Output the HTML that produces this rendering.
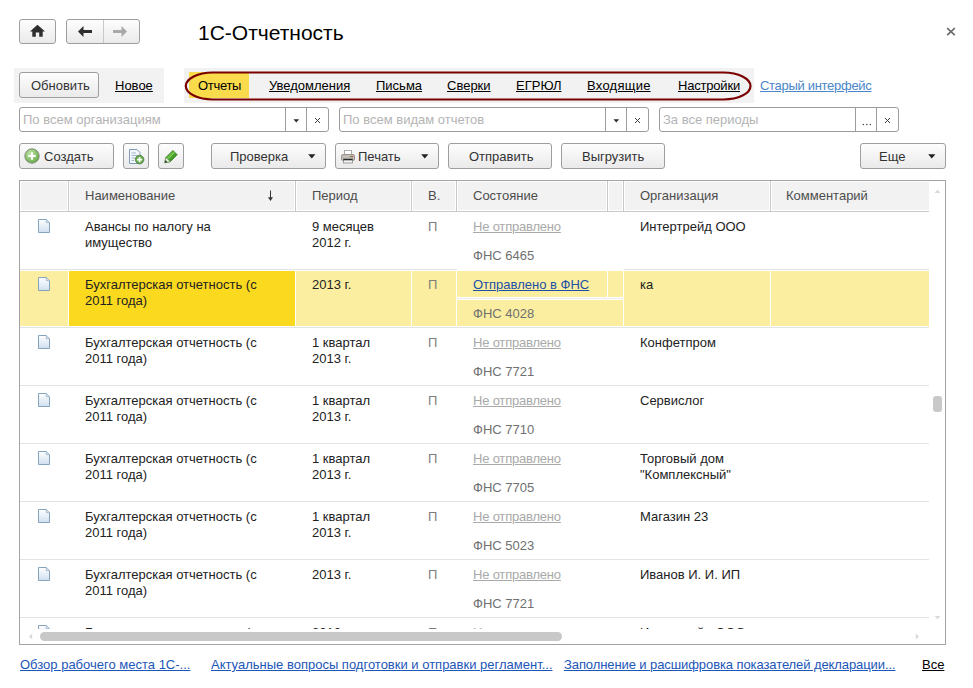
<!DOCTYPE html>
<html><head><meta charset="utf-8">
<style>
*{box-sizing:border-box;margin:0;padding:0}
html,body{width:973px;height:688px;overflow:hidden;background:#fff}
body{position:relative;font-family:"Liberation Sans",sans-serif;font-size:13px;color:#333}
.a{position:absolute}
.btn{position:absolute;border:1px solid #9e9e9e;border-radius:3px;background:linear-gradient(#fdfdfd,#eaeaea);height:26px}
.t{position:absolute;white-space:nowrap;line-height:16px}
.u{text-decoration:underline}
.panel{position:absolute;background:#f2f2f2}
.inp{position:absolute;border:1px solid #9c9c9c;border-radius:3px;background:#fff;height:25px}
.ph{position:absolute;color:#b4b4b4;white-space:nowrap;line-height:16px}
.vd{position:absolute;top:0;bottom:0;width:1px;background:#9c9c9c}
.tri{position:absolute;width:0;height:0;border-left:3.5px solid transparent;border-right:3.5px solid transparent;border-top:4px solid #333}
.hb{position:absolute;background:#f2f2f2}
.hl{position:absolute;background:#c9c9c9}
.ht{position:absolute;white-space:nowrap;color:#4d4d4d;line-height:16px}
.bt{position:absolute;white-space:nowrap;color:#222;line-height:16px}
.sep{position:absolute;height:1px;background:#e3e3e3}
.doc{position:absolute}
</style></head><body>
<div class="btn" style="left:19px;top:19px;width:37px;height:25px"></div>
<svg class="a" style="left:30px;top:24px" width="16" height="14" viewBox="0 0 16 14"><path d="M7.5 0.8 L0 7.6 H2.3 V12.8 H5.8 V8.5 H9.2 V12.8 H12.7 V7.6 H15 Z" fill="#2e2e2e"/></svg>
<div class="btn" style="left:66px;top:19px;width:74px;height:25px"></div>
<div class="a" style="left:103px;top:20px;width:1px;height:23px;background:#c8c8c8"></div>
<svg class="a" style="left:77px;top:25px" width="16" height="13" viewBox="0 0 16 13"><path d="M1 6.5 L6.5 1 V5 H15 V8 H6.5 V12 Z" fill="#2e2e2e"/></svg>
<svg class="a" style="left:112px;top:25px" width="16" height="13" viewBox="0 0 16 13"><path d="M15 6.5 L9.5 1 V5 H1 V8 H9.5 V12 Z" fill="#a8a8a8"/></svg>
<div class="t" style="left:198px;top:22px;font-size:21px;line-height:22px;color:#000">1С-Отчетность</div>
<svg class="a" style="left:946px;top:27px" width="10" height="10" viewBox="0 0 10 10"><path d="M1.2 1.2 L8.8 8.2 M8.8 1.2 L1.2 8.2" stroke="#6a6a6a" stroke-width="1.6"/></svg>
<div class="panel" style="left:14px;top:68px;width:150px;height:35px"></div>
<div class="btn" style="left:19px;top:72px;width:80px;height:26px"></div>
<div class="t" style="left:31px;top:78px">Обновить</div>
<div class="t u" style="left:115px;top:78px;color:#000">Новое</div>
<div class="panel" style="left:184px;top:68px;width:570px;height:35px"></div>
<div class="a" style="left:189px;top:72px;width:60px;height:26px;background:#fadb4c"></div>
<div class="t" style="left:198px;top:78px;color:#000;letter-spacing:-0.3px">Отчеты</div>
<div class="t u" style="left:269px;top:78px;color:#000;letter-spacing:0px">Уведомления</div>
<div class="t u" style="left:376px;top:78px;color:#000;letter-spacing:0px">Письма</div>
<div class="t u" style="left:447px;top:78px;color:#000;letter-spacing:0px">Сверки</div>
<div class="t u" style="left:516px;top:78px;color:#000;letter-spacing:0px">ЕГРЮЛ</div>
<div class="t u" style="left:587px;top:78px;color:#000;letter-spacing:0.25px">Входящие</div>
<div class="t u" style="left:678px;top:78px;color:#000;letter-spacing:-0.2px">Настройки</div>
<svg class="a" style="left:0;top:0" width="973" height="110"><rect x="185.8" y="72.5" width="564.7" height="27" rx="27" ry="13.5" fill="none" stroke="#7a0000" stroke-width="2.2"/></svg>
<div class="t u" style="left:760px;top:78px;color:#4a86c8;letter-spacing:-0.3px">Старый интерфейс</div>
<div class="inp" style="left:19px;top:107px;width:310px"><div class="vd" style="left:265px"></div><div class="vd" style="left:286px"></div></div>
<div class="ph" style="left:23px;top:112px">По всем организациям</div>
<svg class="a" style="left:293px;top:119px" width="7" height="4" viewBox="0 0 7 4"><path d="M0.5 0.3H6.1L3.3 3.6Z" fill="#2a2a2a"/></svg>
<svg class="a" style="left:314px;top:117px" width="7" height="7" viewBox="0 0 7 7"><path d="M1 1L6 6M6 1L1 6" stroke="#3a3a3a" stroke-width="1"/></svg>
<div class="inp" style="left:339px;top:107px;width:310px"><div class="vd" style="left:265px"></div><div class="vd" style="left:286px"></div></div>
<div class="ph" style="left:343px;top:112px">По всем видам отчетов</div>
<svg class="a" style="left:613px;top:119px" width="7" height="4" viewBox="0 0 7 4"><path d="M0.5 0.3H6.1L3.3 3.6Z" fill="#2a2a2a"/></svg>
<svg class="a" style="left:634px;top:117px" width="7" height="7" viewBox="0 0 7 7"><path d="M1 1L6 6M6 1L1 6" stroke="#3a3a3a" stroke-width="1"/></svg>
<div class="inp" style="left:659px;top:107px;width:240px"><div class="vd" style="left:195px"></div><div class="vd" style="left:216px"></div></div>
<div class="ph" style="left:663px;top:112px">За все периоды</div>
<svg class="a" style="left:861px;top:122px" width="12" height="4" viewBox="0 0 12 4"><circle cx="2.3" cy="2.4" r="0.75" fill="#444"/><circle cx="5.8" cy="2.4" r="0.75" fill="#444"/><circle cx="9.3" cy="2.4" r="0.75" fill="#444"/></svg>
<svg class="a" style="left:884px;top:117px" width="7" height="7" viewBox="0 0 7 7"><path d="M1 1L6 6M6 1L1 6" stroke="#3a3a3a" stroke-width="1"/></svg>
<div class="btn" style="left:19px;top:143px;width:95px"></div>
<div class="t" style="left:44px;top:149px">Создать</div>
<svg class="a" style="left:24px;top:148px" width="16" height="16" viewBox="0 0 16 16"><defs><radialGradient id="g1" cx="0.4" cy="0.35" r="0.7"><stop offset="0" stop-color="#c4e8ac"/><stop offset="1" stop-color="#62a844"/></radialGradient></defs><circle cx="8" cy="8" r="7.2" fill="url(#g1)" stroke="#7a8676" stroke-width="0.9"/><path d="M8 4.2V11.8M4.2 8H11.8" stroke="#fff" stroke-width="2"/></svg>
<div class="btn" style="left:123px;top:143px;width:26px"></div>
<svg class="a" style="left:128px;top:148px" width="17" height="17" viewBox="0 0 17 17"><path d="M1.5 1.5H9L12 4.5V15.5H1.5Z" fill="#f4f8fc" stroke="#7f9ab6"/><path d="M3.5 5H8M3.5 7.5H10M3.5 10H7M3.5 12.5H6" stroke="#9fb6cc" stroke-width="1"/><circle cx="11.6" cy="11.6" r="4.3" fill="#62ae44" stroke="#5a7456" stroke-width="0.8"/><path d="M11.6 9V14.2M9 11.6H14.2" stroke="#fff" stroke-width="1.7"/></svg>
<div class="btn" style="left:158px;top:143px;width:26px"></div>
<svg class="a" style="left:163px;top:149px" width="16" height="16" viewBox="0 0 16 16"><defs><linearGradient id="pg" x1="0" y1="0" x2="1" y2="1"><stop offset="0" stop-color="#8fd46a"/><stop offset="0.5" stop-color="#4aa82c"/><stop offset="1" stop-color="#2a7a14"/></linearGradient></defs><path d="M1.8 13.8 L2.9 8.4 L9.9 1.4 L14.2 5.7 L7.2 12.7 Z" fill="url(#pg)" stroke="#2a6a16" stroke-width="0.7"/><path d="M1.8 13.8 L2.9 8.4 L7.2 12.7 Z" fill="#f2f6ee" stroke="#5a7a4a" stroke-width="0.5"/><path d="M1.8 13.8 L2.5 11.1 L4.5 13.1 Z" fill="#1d4010"/><path d="M5 9.6 L11.2 3.4" stroke="#a8e47a" stroke-width="1"/></svg>
<div class="btn" style="left:211px;top:143px;width:115px"></div>
<div class="t" style="left:230px;top:149px">Проверка</div>
<svg class="a" style="left:308px;top:154px" width="8" height="5" viewBox="0 0 8 5"><path d="M0.2 0.2H7.4L3.8 4.4Z" fill="#222"/></svg>
<div class="btn" style="left:335px;top:143px;width:104px"></div>
<div class="t" style="left:358px;top:149px">Печать</div>
<svg class="a" style="left:421px;top:154px" width="8" height="5" viewBox="0 0 8 5"><path d="M0.2 0.2H7.4L3.8 4.4Z" fill="#222"/></svg>
<svg class="a" style="left:341px;top:150px" width="14" height="14" viewBox="0 0 14 14"><rect x="3.5" y="0.5" width="7" height="4.5" fill="#fff" stroke="#9a9a9a" stroke-width="0.8"/><rect x="0.5" y="4.5" width="13" height="6" rx="1.5" fill="#c4bcb4" stroke="#8a8580" stroke-width="0.8"/><rect x="2.5" y="8.5" width="9" height="4.5" fill="#f4f4f4" stroke="#8a8a8a" stroke-width="0.8"/><rect x="2.5" y="9" width="9" height="1.3" fill="#2a2a2a"/><rect x="10.5" y="6" width="1.2" height="1.2" fill="#d02020"/><rect x="9" y="6" width="1.2" height="1.2" fill="#30a030"/></svg>
<div class="btn" style="left:448px;top:143px;width:104px"></div>
<div class="t" style="left:469px;top:149px">Отправить</div>
<div class="btn" style="left:561px;top:143px;width:104px"></div>
<div class="t" style="left:582px;top:149px">Выгрузить</div>
<div class="btn" style="left:860px;top:143px;width:86px"></div>
<div class="t" style="left:879px;top:149px">Еще</div>
<svg class="a" style="left:928px;top:154px" width="8" height="5" viewBox="0 0 8 5"><path d="M0.2 0.2H7.4L3.8 4.4Z" fill="#222"/></svg>
<div class="a" style="left:19px;top:180px;width:927px;height:465px;border:1px solid #a3a3a3"></div>
<div class="hb" style="left:21px;top:182px;width:46px;height:28px"></div>
<div class="hb" style="left:70px;top:182px;width:224px;height:28px"></div>
<div class="hb" style="left:297px;top:182px;width:113px;height:28px"></div>
<div class="hb" style="left:413px;top:182px;width:42px;height:28px"></div>
<div class="hb" style="left:458px;top:182px;width:148px;height:28px"></div>
<div class="hb" style="left:609px;top:182px;width:13px;height:28px"></div>
<div class="hb" style="left:625px;top:182px;width:144px;height:28px"></div>
<div class="hb" style="left:772px;top:182px;width:157px;height:28px"></div>
<div class="hl" style="left:68px;top:181px;width:1px;height:30px"></div>
<div class="hl" style="left:295px;top:181px;width:1px;height:30px"></div>
<div class="hl" style="left:411px;top:181px;width:1px;height:30px"></div>
<div class="hl" style="left:456px;top:181px;width:1px;height:30px"></div>
<div class="hl" style="left:607px;top:181px;width:1px;height:30px"></div>
<div class="hl" style="left:623px;top:181px;width:1px;height:30px"></div>
<div class="hl" style="left:770px;top:181px;width:1px;height:30px"></div>
<div class="hl" style="left:20px;top:211px;width:909px;height:1px"></div>
<div class="ht" style="left:85px;top:188px">Наименование</div>
<div class="ht" style="left:312px;top:188px">Период</div>
<div class="ht" style="left:428px;top:188px">В.</div>
<div class="ht" style="left:473px;top:188px">Состояние</div>
<div class="ht" style="left:640px;top:188px">Организация</div>
<div class="ht" style="left:786px;top:188px">Комментарий</div>
<svg class="a" style="left:266px;top:190px" width="9" height="12" viewBox="0 0 9 12"><path d="M4.5 0.5V10" stroke="#333" stroke-width="1"/><path d="M2 7.2L4.5 11L7 7.2Z" fill="#333"/></svg>
<div class="a" style="left:20px;top:212px;width:909px;height:417px;overflow:hidden">
<div class="sep" style="left:0px;top:57px;width:909px"></div>
<svg class="doc" style="left:18px;top:7px" width="13" height="15" viewBox="0 0 13 15"><defs><linearGradient id="dg" x1="0" y1="0" x2="0" y2="1"><stop offset="0" stop-color="#fff"/><stop offset="1" stop-color="#cfe0ef"/></linearGradient></defs><path d="M0.5 0.5H8.3L11.5 3.7V13.5H0.5Z" fill="url(#dg)" stroke="#86a3bd" stroke-width="1"/><path d="M8.3 0.5V3.7H11.5" fill="#d8e4ee" stroke="#9bb3c8" stroke-width="0.8"/></svg>
<div class="bt" style="left:65px;top:7px">Авансы по налогу на</div>
<div class="bt" style="left:65px;top:23px">имущество</div>
<div class="bt" style="left:292px;top:7px">9 месяцев</div>
<div class="bt" style="left:292px;top:23px">2012 г.</div>
<div class="bt" style="left:408px;top:7px;color:#7d7d7d">П</div>
<div class="bt u" style="left:453px;top:7px;color:#a9a9a9;letter-spacing:-0.2px">Не отправлено</div>
<div class="bt" style="left:453px;top:36px;color:#707070">ФНС 6465</div>
<div class="bt" style="left:620px;top:7px">Интертрейд ООО</div>
<div class="a" style="left:0px;top:59px;width:48px;height:55px;background:#fbeea0"></div>
<div class="a" style="left:49px;top:59px;width:226px;height:55px;background:#fbd91f"></div>
<div class="a" style="left:276px;top:59px;width:115px;height:55px;background:#fbeea0"></div>
<div class="a" style="left:392px;top:59px;width:44px;height:55px;background:#fbeea0"></div>
<div class="a" style="left:437px;top:59px;width:150px;height:26px;background:#fbeea0"></div>
<div class="a" style="left:588px;top:59px;width:15px;height:26px;background:#fbeea0"></div>
<div class="a" style="left:437px;top:88px;width:166px;height:26px;background:#fbeea0"></div>
<div class="a" style="left:437px;top:86px;width:166px;height:1px;background:#ececec"></div>
<div class="a" style="left:604px;top:59px;width:146px;height:55px;background:#fbeea0"></div>
<div class="a" style="left:751px;top:59px;width:158px;height:55px;background:#fbeea0"></div>
<div class="sep" style="left:0px;top:115px;width:909px"></div>
<svg class="doc" style="left:18px;top:65px" width="13" height="15" viewBox="0 0 13 15"><defs><linearGradient id="dg" x1="0" y1="0" x2="0" y2="1"><stop offset="0" stop-color="#fff"/><stop offset="1" stop-color="#cfe0ef"/></linearGradient></defs><path d="M0.5 0.5H8.3L11.5 3.7V13.5H0.5Z" fill="url(#dg)" stroke="#86a3bd" stroke-width="1"/><path d="M8.3 0.5V3.7H11.5" fill="#d8e4ee" stroke="#9bb3c8" stroke-width="0.8"/></svg>
<div class="bt" style="left:65px;top:65px">Бухгалтерская отчетность (с</div>
<div class="bt" style="left:65px;top:81px">2011 года)</div>
<div class="bt" style="left:292px;top:65px">2013 г.</div>
<div class="bt" style="left:408px;top:65px;color:#7d7d7d">П</div>
<div class="bt u" style="left:453px;top:65px;color:#1c4fa8">Отправлено в ФНС</div>
<div class="bt" style="left:453px;top:94px;color:#707070">ФНС 4028</div>
<div class="bt" style="left:620px;top:65px">ка</div>
<div class="sep" style="left:0px;top:173px;width:909px"></div>
<svg class="doc" style="left:18px;top:123px" width="13" height="15" viewBox="0 0 13 15"><defs><linearGradient id="dg" x1="0" y1="0" x2="0" y2="1"><stop offset="0" stop-color="#fff"/><stop offset="1" stop-color="#cfe0ef"/></linearGradient></defs><path d="M0.5 0.5H8.3L11.5 3.7V13.5H0.5Z" fill="url(#dg)" stroke="#86a3bd" stroke-width="1"/><path d="M8.3 0.5V3.7H11.5" fill="#d8e4ee" stroke="#9bb3c8" stroke-width="0.8"/></svg>
<div class="bt" style="left:65px;top:123px">Бухгалтерская отчетность (с</div>
<div class="bt" style="left:65px;top:139px">2011 года)</div>
<div class="bt" style="left:292px;top:123px">1 квартал</div>
<div class="bt" style="left:292px;top:139px">2013 г.</div>
<div class="bt" style="left:408px;top:123px;color:#7d7d7d">П</div>
<div class="bt u" style="left:453px;top:123px;color:#a9a9a9;letter-spacing:-0.2px">Не отправлено</div>
<div class="bt" style="left:453px;top:152px;color:#707070">ФНС 7721</div>
<div class="bt" style="left:620px;top:123px">Конфетпром</div>
<div class="sep" style="left:0px;top:231px;width:909px"></div>
<svg class="doc" style="left:18px;top:181px" width="13" height="15" viewBox="0 0 13 15"><defs><linearGradient id="dg" x1="0" y1="0" x2="0" y2="1"><stop offset="0" stop-color="#fff"/><stop offset="1" stop-color="#cfe0ef"/></linearGradient></defs><path d="M0.5 0.5H8.3L11.5 3.7V13.5H0.5Z" fill="url(#dg)" stroke="#86a3bd" stroke-width="1"/><path d="M8.3 0.5V3.7H11.5" fill="#d8e4ee" stroke="#9bb3c8" stroke-width="0.8"/></svg>
<div class="bt" style="left:65px;top:181px">Бухгалтерская отчетность (с</div>
<div class="bt" style="left:65px;top:197px">2011 года)</div>
<div class="bt" style="left:292px;top:181px">1 квартал</div>
<div class="bt" style="left:292px;top:197px">2013 г.</div>
<div class="bt" style="left:408px;top:181px;color:#7d7d7d">П</div>
<div class="bt u" style="left:453px;top:181px;color:#a9a9a9;letter-spacing:-0.2px">Не отправлено</div>
<div class="bt" style="left:453px;top:210px;color:#707070">ФНС 7710</div>
<div class="bt" style="left:620px;top:181px">Сервислог</div>
<div class="sep" style="left:0px;top:289px;width:909px"></div>
<svg class="doc" style="left:18px;top:239px" width="13" height="15" viewBox="0 0 13 15"><defs><linearGradient id="dg" x1="0" y1="0" x2="0" y2="1"><stop offset="0" stop-color="#fff"/><stop offset="1" stop-color="#cfe0ef"/></linearGradient></defs><path d="M0.5 0.5H8.3L11.5 3.7V13.5H0.5Z" fill="url(#dg)" stroke="#86a3bd" stroke-width="1"/><path d="M8.3 0.5V3.7H11.5" fill="#d8e4ee" stroke="#9bb3c8" stroke-width="0.8"/></svg>
<div class="bt" style="left:65px;top:239px">Бухгалтерская отчетность (с</div>
<div class="bt" style="left:65px;top:255px">2011 года)</div>
<div class="bt" style="left:292px;top:239px">1 квартал</div>
<div class="bt" style="left:292px;top:255px">2013 г.</div>
<div class="bt" style="left:408px;top:239px;color:#7d7d7d">П</div>
<div class="bt u" style="left:453px;top:239px;color:#a9a9a9;letter-spacing:-0.2px">Не отправлено</div>
<div class="bt" style="left:453px;top:268px;color:#707070">ФНС 7705</div>
<div class="bt" style="left:620px;top:239px">Торговый дом</div>
<div class="bt" style="left:620px;top:255px">"Комплексный"</div>
<div class="sep" style="left:0px;top:347px;width:909px"></div>
<svg class="doc" style="left:18px;top:297px" width="13" height="15" viewBox="0 0 13 15"><defs><linearGradient id="dg" x1="0" y1="0" x2="0" y2="1"><stop offset="0" stop-color="#fff"/><stop offset="1" stop-color="#cfe0ef"/></linearGradient></defs><path d="M0.5 0.5H8.3L11.5 3.7V13.5H0.5Z" fill="url(#dg)" stroke="#86a3bd" stroke-width="1"/><path d="M8.3 0.5V3.7H11.5" fill="#d8e4ee" stroke="#9bb3c8" stroke-width="0.8"/></svg>
<div class="bt" style="left:65px;top:297px">Бухгалтерская отчетность (с</div>
<div class="bt" style="left:65px;top:313px">2011 года)</div>
<div class="bt" style="left:292px;top:297px">1 квартал</div>
<div class="bt" style="left:292px;top:313px">2013 г.</div>
<div class="bt" style="left:408px;top:297px;color:#7d7d7d">П</div>
<div class="bt u" style="left:453px;top:297px;color:#a9a9a9;letter-spacing:-0.2px">Не отправлено</div>
<div class="bt" style="left:453px;top:326px;color:#707070">ФНС 5023</div>
<div class="bt" style="left:620px;top:297px">Магазин 23</div>
<div class="sep" style="left:0px;top:405px;width:909px"></div>
<svg class="doc" style="left:18px;top:355px" width="13" height="15" viewBox="0 0 13 15"><defs><linearGradient id="dg" x1="0" y1="0" x2="0" y2="1"><stop offset="0" stop-color="#fff"/><stop offset="1" stop-color="#cfe0ef"/></linearGradient></defs><path d="M0.5 0.5H8.3L11.5 3.7V13.5H0.5Z" fill="url(#dg)" stroke="#86a3bd" stroke-width="1"/><path d="M8.3 0.5V3.7H11.5" fill="#d8e4ee" stroke="#9bb3c8" stroke-width="0.8"/></svg>
<div class="bt" style="left:65px;top:355px">Бухгалтерская отчетность (с</div>
<div class="bt" style="left:65px;top:371px">2011 года)</div>
<div class="bt" style="left:292px;top:355px">2013 г.</div>
<div class="bt" style="left:408px;top:355px;color:#7d7d7d">П</div>
<div class="bt u" style="left:453px;top:355px;color:#a9a9a9;letter-spacing:-0.2px">Не отправлено</div>
<div class="bt" style="left:453px;top:384px;color:#707070">ФНС 7721</div>
<div class="bt" style="left:620px;top:355px">Иванов И. И. ИП</div>
<div class="sep" style="left:0px;top:463px;width:909px"></div>
<svg class="doc" style="left:18px;top:413px" width="13" height="15" viewBox="0 0 13 15"><defs><linearGradient id="dg" x1="0" y1="0" x2="0" y2="1"><stop offset="0" stop-color="#fff"/><stop offset="1" stop-color="#cfe0ef"/></linearGradient></defs><path d="M0.5 0.5H8.3L11.5 3.7V13.5H0.5Z" fill="url(#dg)" stroke="#86a3bd" stroke-width="1"/><path d="M8.3 0.5V3.7H11.5" fill="#d8e4ee" stroke="#9bb3c8" stroke-width="0.8"/></svg>
<div class="bt" style="left:65px;top:413px">Бухгалтерская отчетность (с</div>
<div class="bt" style="left:65px;top:429px">2011 года)</div>
<div class="bt" style="left:292px;top:413px">2013 г.</div>
<div class="bt" style="left:408px;top:413px;color:#7d7d7d">П</div>
<div class="bt u" style="left:453px;top:413px;color:#a9a9a9;letter-spacing:-0.2px">Не отправлено</div>
<div class="bt" style="left:453px;top:442px;color:#707070">ФНС 7721</div>
<div class="bt" style="left:620px;top:413px">Интертрейд ООО</div>
<div class="a" style="left:437px;top:57px;width:167px;height:1px;background:#fff"></div>
</div>
<svg class="a" style="left:934px;top:189px" width="7" height="5" viewBox="0 0 7 5"><path d="M0.6 4L3.5 0.8L6.4 4Z" fill="#d9d9d9"/></svg>
<svg class="a" style="left:934px;top:615px" width="7" height="5" viewBox="0 0 7 5"><path d="M0.6 1L3.5 4.2L6.4 1Z" fill="#d9d9d9"/></svg>
<div class="a" style="left:933px;top:396px;width:9px;height:16px;border-radius:3px;background:#c9c9c9"></div>
<div class="a" style="left:40px;top:632px;width:522px;height:9px;border-radius:4.5px;background:#c8c8c8"></div>
<svg class="a" style="left:28px;top:633px" width="5" height="7" viewBox="0 0 5 7"><path d="M4.2 0.6L1 3.5L4.2 6.4Z" fill="#d9d9d9"/></svg>
<svg class="a" style="left:915px;top:633px" width="5" height="7" viewBox="0 0 5 7"><path d="M0.8 0.6L4 3.5L0.8 6.4Z" fill="#d9d9d9"/></svg>
<div class="t u" style="left:20px;top:657px;color:#1c56b8">Обзор рабочего места 1С-...</div>
<div class="t u" style="left:211px;top:657px;color:#1c56b8">Актуальные вопросы подготовки и отправки регламент...</div>
<div class="t u" style="left:564px;top:657px;color:#1c56b8;letter-spacing:-0.09px">Заполнение и расшифровка показателей декларации...</div>
<div class="t u" style="left:922px;top:657px;color:#000">Все</div>
</body></html>
